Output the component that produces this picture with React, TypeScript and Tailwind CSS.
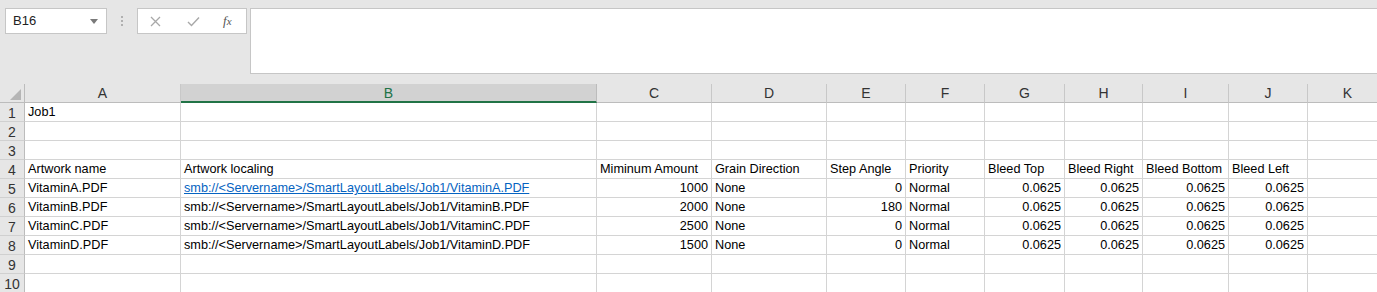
import React from "react";

// column layout taken from the sheet: [letter, width]
const cols: [string, number][] = [
  ["A", 156],
  ["B", 416],
  ["C", 115],
  ["D", 115],
  ["E", 79],
  ["F", 79],
  ["G", 80],
  ["H", 78],
  ["I", 86],
  ["J", 79],
  ["K", 80],
];

type Cell = { v: string; right?: boolean; link?: boolean };

const path = (n: string) => `smb://<Servername>/SmartLayoutLabels/Job1/Vitamin${n}.PDF`;

const dataRow = (n: string, amount: string, angle: string, link = false): Cell[] => [
  { v: `Vitamin${n}.PDF` },
  { v: path(n), link },
  { v: amount, right: true },
  { v: "None" },
  { v: angle, right: true },
  { v: "Normal" },
  { v: "0.0625", right: true },
  { v: "0.0625", right: true },
  { v: "0.0625", right: true },
  { v: "0.0625", right: true },
  { v: "" },
];

const rows: Cell[][] = [
  [{ v: "Job1" }],
  [],
  [],
  [
    { v: "Artwork name" },
    { v: "Artwork localing" },
    { v: "Miminum Amount" },
    { v: "Grain Direction" },
    { v: "Step Angle" },
    { v: "Priority" },
    { v: "Bleed Top" },
    { v: "Bleed Right" },
    { v: "Bleed Bottom" },
    { v: "Bleed Left" },
  ],
  dataRow("A", "1000", "0", true),
  dataRow("B", "2000", "180"),
  dataRow("C", "2500", "0"),
  dataRow("D", "1500", "0"),
  [],
  [],
];

const FormulaBar = () => (
  <div className="flex items-start h-[84px] bg-[#e6e6e6] pt-[8px]">
    <div className="ml-[5px] w-[102px] h-[26px] bg-white border border-[#c6c6c6] flex items-center justify-between pl-[7px] pr-[8px]">
      <span className="text-[13px] text-[#222]">B16</span>
      <svg width="8" height="5" viewBox="0 0 8 5">
        <path d="M0 0 L8 0 L4 5 Z" fill="#7a7a7a" />
      </svg>
    </div>
    <div className="w-[30px] h-[26px] flex flex-col items-center justify-center gap-[2px]">
      <span className="w-[2px] h-[2px] bg-[#b0b0b0]" />
      <span className="w-[2px] h-[2px] bg-[#b0b0b0]" />
      <span className="w-[2px] h-[2px] bg-[#b0b0b0]" />
    </div>
    <div className="w-[110px] h-[26px] bg-white border border-[#c6c6c6] flex items-center">
      <svg className="ml-[12px]" width="11" height="11" viewBox="0 0 11 11">
        <path d="M1 1 L10 10 M10 1 L1 10" stroke="#a8a8a8" strokeWidth="1.3" />
      </svg>
      <svg className="ml-[26px]" width="13" height="11" viewBox="0 0 13 11">
        <path d="M1 6 L4.5 9.5 L12 1.5" stroke="#a8a8a8" strokeWidth="1.4" fill="none" />
      </svg>
      <span className="ml-[23px] text-[13px] italic text-[#555] font-['Liberation_Serif',serif]">f<span className="text-[11px]">x</span></span>
    </div>
    <div className="ml-[3px] flex-1 h-[66px] bg-white border border-[#c6c6c6] border-r-0" />
  </div>
);

const HeaderRow = () => (
  <div className="flex h-[19px]">
    <div className="w-[25px] shrink-0 bg-[#e6e6e6] border-r border-b border-[#bcbcbc] flex items-end justify-end pr-[3px] pb-[2px]">
      <svg width="11" height="11" viewBox="0 0 11 11">
        <path d="M11 0 L11 11 L0 11 Z" fill="#b5b5b5" />
      </svg>
    </div>
    {cols.map(([c, w]) =>
      c === "B" ? (
        <div
          key={c}
          style={{ width: w }}
          className="shrink-0 bg-[#d2d2d2] border-r border-[#bcbcbc] border-b-2 border-b-[#217346] flex items-center justify-center pt-[1px] text-[14px] text-[#217346]"
        >
          {c}
        </div>
      ) : (
        <div
          key={c}
          style={{ width: w }}
          className="shrink-0 bg-[#e6e6e6] border-r border-b border-[#c8c8c8] border-b-[#bcbcbc] flex items-center justify-center pt-[1px] text-[14px] text-[#333]"
        >
          {c}
        </div>
      )
    )}
  </div>
);

const App = () => {
  return (
    <div className="w-[1377px] h-[292px] overflow-hidden bg-white font-['Liberation_Sans',Arial,sans-serif]">
      <FormulaBar />
      <HeaderRow />
      {rows.map((r, i) => (
        <div key={i} className="flex h-[19px]">
          <div className="w-[25px] shrink-0 bg-[#e6e6e6] border-r border-r-[#bcbcbc] border-b border-b-[#d0d0d0] flex items-center justify-center pt-[2px] text-[14px] text-[#333]">
            {i + 1}
          </div>
          {cols.map(([c, w], j) => {
            const cell = r[j];
            return (
              <div
                key={c}
                style={{ width: w }}
                className={
                  "shrink-0 border-r border-b border-[#d4d4d4] flex items-center pt-[2px] px-[3px] text-[12.7px] text-black whitespace-nowrap " +
                  (cell?.right ? "justify-end" : "justify-start")
                }
              >
                {cell?.link ? (
                  <span className="text-[#0563c1] underline">{cell.v}</span>
                ) : (
                  cell?.v
                )}
              </div>
            );
          })}
        </div>
      ))}
    </div>
  );
};

export default App;
